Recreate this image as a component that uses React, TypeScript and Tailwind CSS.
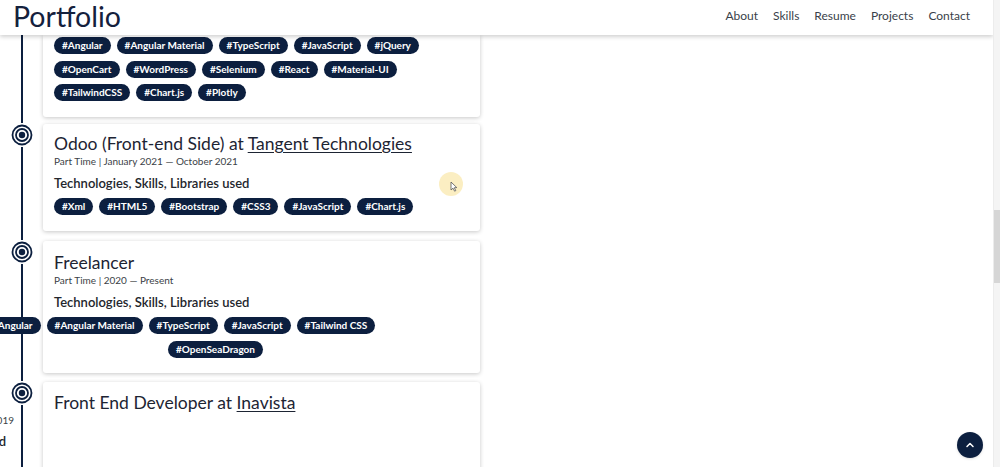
import { ChevronUp } from 'lucide-react';

const navy = 'bg-[#0c1f3f]';

function Tag({ label }: { label: string }) {
  return (
    <span className={`${navy} text-white text-[10px] font-bold leading-[17px] h-[17px] px-[8px] rounded-full whitespace-nowrap`}>
      #{label}
    </span>
  );
}

function Dot() {
  return (
    <div className="w-[24px] h-[24px] -mt-[1px] bg-white flex items-center justify-center ml-[10px]">
      <svg width="22" height="22" viewBox="0 0 22 22">
        <circle cx="11" cy="11" r="9.5" fill="none" stroke="#0c1f3f" strokeWidth="1.8" />
        <circle cx="11" cy="11" r="6" fill="none" stroke="#0c1f3f" strokeWidth="1.8" />
        <circle cx="11" cy="11" r="3.2" fill="#0c1f3f" />
      </svg>
    </div>
  );
}

function Title({ role, company }: { role: string; company?: string }) {
  return (
    <h2 className="text-[17.5px] leading-[20px] text-[#1d2433]">
      {role}
      {company && (
        <>
          {' '}at <span className="underline underline-offset-2">{company}</span>
        </>
      )}
    </h2>
  );
}

function Sub({ text }: { text: string }) {
  return <p className="text-[10px] leading-[14px] text-[#3b3f47]">{text}</p>;
}

function Used() {
  return <p className="text-[13px] leading-[18px] font-semibold text-[#23262d] mt-[6px]">Technologies, Skills, Libraries used</p>;
}

export default function App() {
  const row1 = ['Angular', 'Angular Material', 'TypeScript', 'JavaScript', 'jQuery'];
  const row2 = ['OpenCart', 'WordPress', 'Selenium', 'React', 'Material-UI'];
  const row3 = ['TailwindCSS', 'Chart.js', 'Plotly'];
  const odoo = ['Xml', 'HTML5', 'Bootstrap', 'CSS3', 'JavaScript', 'Chart.js'];
  const free = ['Angular', 'Angular Material', 'TypeScript', 'JavaScript', 'Tailwind CSS'];

  return (
    <div className="flex h-[467px] w-[1000px] overflow-hidden bg-white" style={{ fontFamily: 'Lato, "Noto Sans", sans-serif' }}>
      <div className="relative flex-1 overflow-hidden">
        {/* Header */}
        <header className="relative z-10 h-[35px] bg-white shadow-[0_2px_4px_rgba(0,0,0,0.18)] flex items-center justify-between pl-[13px] pr-[23px] pb-[3px]">
          <span className="text-[28.5px] leading-none text-[#14213d]">Portfolio</span>
          <nav className="flex items-center gap-[15px] text-[12px] text-[#3a3f4a]">
            <a>About</a>
            <a>Skills</a>
            <a>Resume</a>
            <a>Projects</a>
            <a>Contact</a>
          </nav>
        </header>

        {/* Timeline */}
        <div className="relative">
          <div className="absolute left-[21px] top-0 bottom-0 w-[2px] bg-[#0c1f3f]" />

          {/* Card 1 (scrolled) */}
          <div className="relative flex">
            <div className="w-[43px] shrink-0" />
            <div className="w-[437px] bg-white shadow-[0_1px_4px_rgba(0,0,0,0.22)] rounded-b-[3px] px-[11px] pt-[2px] pb-[16px] flex flex-col gap-[6.5px]">
              <div className="flex gap-[6px]">{row1.map((t) => <Tag key={t} label={t} />)}</div>
              <div className="flex gap-[6px]">{row2.map((t) => <Tag key={t} label={t} />)}</div>
              <div className="flex gap-[6px]">{row3.map((t) => <Tag key={t} label={t} />)}</div>
            </div>
          </div>

          {/* Card 2 */}
          <div className="relative flex mt-[7px]">
            <div className="w-[43px] shrink-0">
              <Dot />
            </div>
            <div className="w-[437px] bg-white shadow-[0_1px_4px_rgba(0,0,0,0.22)] rounded-[3px] px-[11px] pt-[10px] pb-[16.5px]">
              <Title role="Odoo (Front-end Side)" company="Tangent Technologies" />
              <Sub text="Part Time | January 2021 — October 2021" />
              <Used />
              <div className="flex gap-[6px] mt-[5.5px]">{odoo.map((t) => <Tag key={t} label={t} />)}</div>
            </div>
          </div>

          {/* Card 3 */}
          <div className="relative flex mt-[10px]">
            <div className="w-[43px] shrink-0">
              <Dot />
            </div>
            <div className="w-[437px] bg-white shadow-[0_1px_4px_rgba(0,0,0,0.22)] rounded-[3px] px-[11px] pt-[12px] pb-[15.5px]">
              <Title role="Freelancer" />
              <Sub text="Part Time | 2020 — Present" />
              <Used />
              <div className="flex gap-[6px] mt-[5.5px] -ml-[70px]">{free.map((t) => <Tag key={t} label={t} />)}</div>
              <div className="flex mt-[7px] ml-[114px]">
                <Tag label="OpenSeaDragon" />
              </div>
            </div>
          </div>

          {/* Card 4 */}
          <div className="relative flex mt-[9px]">
            <div className="relative w-[43px] shrink-0">
              <Dot />
              <span className="absolute right-[29px] top-[31px] text-[10px] leading-[14px] text-[#3b3f47] whitespace-nowrap">Jul 2019</span>
              <span className="absolute right-[37px] top-[50px] text-[13px] leading-[18px] font-semibold text-[#23262d] whitespace-nowrap">used</span>
            </div>
            <div className="w-[437px] h-[120px] bg-white shadow-[0_1px_4px_rgba(0,0,0,0.22)] rounded-[3px] px-[11px] pt-[11px]">
              <Title role="Front End Developer" company="Inavista" />
            </div>
          </div>
        </div>

        {/* Cursor highlight */}
        <div className="absolute left-[439px] top-[172px] w-[24px] h-[24px] rounded-full bg-[#f8e39a]/60 pointer-events-none">
          <svg className="absolute left-[11px] top-[9px]" width="8" height="11" viewBox="0 0 8 11">
            <path d="M1 1 L1 9 L3 7.2 L4.6 10.2 L5.8 9.6 L4.3 6.7 L6.8 6.6 Z" fill="white" stroke="#555" strokeWidth="0.8" />
          </svg>
        </div>

        {/* Scroll to top */}
        <button className={`absolute left-[957px] top-[432px] w-[26px] h-[26px] rounded-full ${navy} flex items-center justify-center shadow`}>
          <ChevronUp className="w-[12px] h-[12px] text-white" strokeWidth={3} />
        </button>
      </div>

      {/* Scrollbar */}
      <div className="w-[7px] shrink-0 bg-[#f4f4f4] border-l border-[#ececec]">
        <div className="mt-[210px] h-[73px] bg-[#d6d6d6]" />
      </div>
    </div>
  );
}
